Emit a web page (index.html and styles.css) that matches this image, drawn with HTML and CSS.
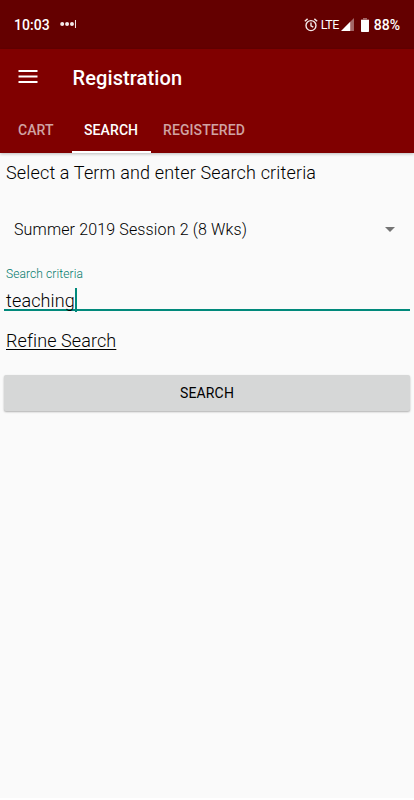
FILE: index.html
```html
<!DOCTYPE html>
<html lang="en">
<head>
<meta charset="utf-8">
<title>Registration</title>
<link rel="stylesheet" href="styles.css">
</head>
<body>
<div class="screen">
  <div class="status">
    <span class="time">10:03</span>
    <svg class="more" width="18" height="10" viewBox="0 0 18 10" fill="#f4eaea"><circle cx="2.2" cy="5" r="2"/><circle cx="7.1" cy="5" r="2"/><circle cx="12" cy="5" r="2"/><path d="M15 1h1v8h-1z"/></svg>
    <svg class="alarm" width="14" height="14" viewBox="0 0 14 14" fill="none" stroke="#f4eaea" stroke-width="1.4"><circle cx="7" cy="7.6" r="5"/><path d="M7 4.6v3.2l2.3 1.4M.8 3.2L3.6.9M13.2 3.2L10.4.9"/></svg>
    <span class="lte">LTE</span>
    <svg class="signal" width="13" height="13" viewBox="0 0 13 13"><path fill="#a36666" d="M13 0v13H9V4z"/><path fill="#fff" d="M9.2 3.8V13H0z"/></svg>
    <svg class="battery" width="8" height="14" viewBox="0 0 8 14"><path fill="#a36666" d="M2 0h4v1.2h2v1.3H0V1.2h2z"/><path fill="#fff" d="M0 2h8v11.2a.8.8 0 0 1-.8.8H.8a.8.8 0 0 1-.8-.8z"/></svg>
    <span class="percent">88%</span>
  </div>
  <header class="appbar">
    <div class="titlebar">
      <svg class="menu" width="20" height="14" viewBox="0 0 20 14" fill="#fff"><path d="M.5 0h19v2H.5zM.5 5.5h19v2H.5zM.5 11h19v2H.5z"/></svg>
      <h1 class="title">Registration</h1>
    </div>
    <nav class="tabs">
      <span class="tab cart">CART</span>
      <span class="tab active">SEARCH</span>
      <span class="tab registered">REGISTERED</span>
    </nav>
  </header>
  <main class="content">
    <p class="intro"><span>Select a Term and enter Search criteria</span></p>
    <div class="term">
      <span class="term-text">Summer 2019 Session 2 (8 Wks)</span>
      <svg width="10" height="5" viewBox="0 0 10 5" fill="#747474"><path d="M0 0h10L5 5z"/></svg>
    </div>
    <div class="label"><span>Search criteria</span></div>
    <div class="field"><span class="value">teaching</span><span class="caret"></span></div>
    <div class="refine"><span class="refine-link">Refine Search</span></div>
    <div class="button"><span>SEARCH</span></div>
  </main>
</div>
</body>
</html>
```
FILE: styles.css
```css
* { box-sizing: border-box; }
body { margin: 0; background: #fff; font-family: Roboto, sans-serif; color: #000; }
.screen { height: 798px; background: #fafafa; overflow: hidden; }
.status { display: flex; align-items: center; height: 49px; padding: 0 14px; background: #640000; color: #fff; font-size: 14px; font-weight: 500; }
.time { width: 46px; letter-spacing: .05px; }
.more { margin-top: -1px; }
.alarm { margin-left: 226px; }
.lte { width: 19px; margin-left: 3px; font-size: 12.5px; font-weight: 400; letter-spacing: -.6px; white-space: nowrap; color: #fff; }
.signal { margin-left: 1px; }
.battery { margin-left: 7px; }
.percent { margin-left: 5px; }
.appbar { height: 104px; background: #800000; box-shadow: 0 1px 3px rgba(0,0,0,.25); }
.titlebar { display: flex; height: 56px; align-items: center; padding-left: 18px; }
.title { margin: 1px 0 0 34.5px; font-size: 20px; line-height: 24px; font-weight: 500; letter-spacing: .1px; color: #fff; }
.tabs { display: flex; height: 48px; }
.tab { padding: 0 12px; font-size: 14px; line-height: 50px; font-weight: 500; letter-spacing: .1px; color: #d0a3a3; }
.cart { width: 72px; padding-left: 18px; }
.active { width: 79px; color: #fff; border-bottom: 2px solid #fff; }
.content { font-weight: 300; }
.intro { margin: 0; padding: 8px 6px 0; font-size: 18px; line-height: 24px; letter-spacing: .155px; }
.term { display: flex; align-items: center; justify-content: space-between; height: 48px; margin-top: 20px; padding: 0 19px 0 14px; font-size: 16px; letter-spacing: .14px; }
.label { margin-top: 13px; padding-left: 6px; font-size: 12px; line-height: 16px; letter-spacing: .1px; color: #00796b; }
.field { display: flex; height: 29px; margin: 0 4px; padding: 6px 0 0 2px; border-bottom: 2px solid #00897b; font-size: 18px; line-height: 25px; letter-spacing: .14px; }
.caret { width: 2px; height: 24px; background: #00897b; }
.refine { height: 64px; padding: 18px 6px 0; font-size: 18px; line-height: 24px; letter-spacing: .1px; }
.refine-link { text-decoration: underline; text-decoration-thickness: 1px; text-underline-offset: 2px; }
.button { height: 36px; margin: 0 4px; border-radius: 2px; background: #d6d7d7; box-shadow: 0 1px 2px rgba(0,0,0,.3); text-align: center; font-size: 14px; line-height: 36px; font-weight: 400; letter-spacing: .15px; }
```
